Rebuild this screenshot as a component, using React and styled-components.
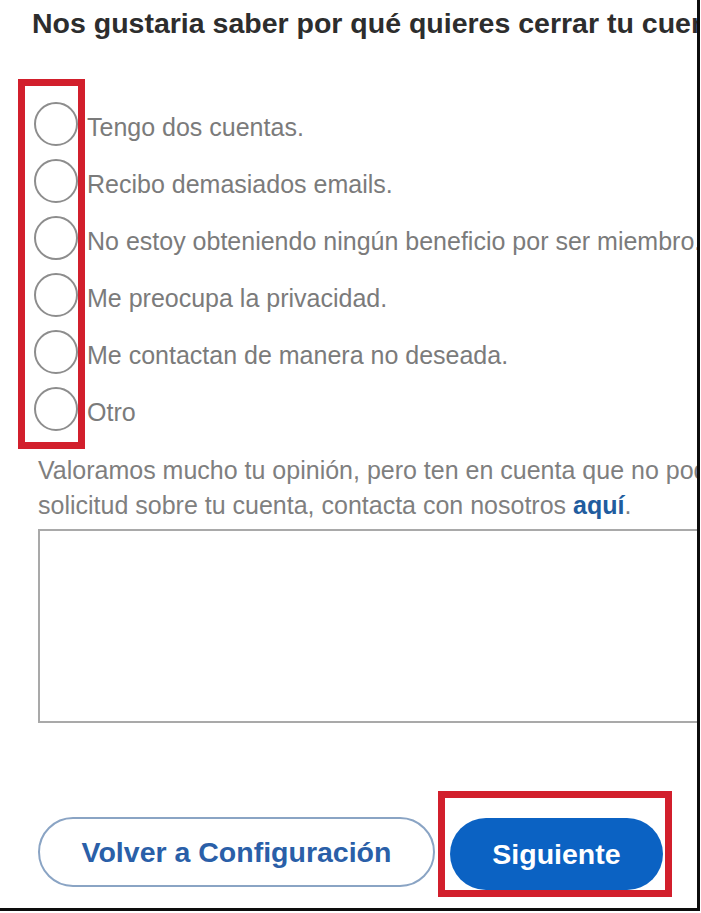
import React from "react";
import styled, { createGlobalStyle } from "styled-components";

const GlobalStyle = createGlobalStyle`
  html, body {
    margin: 0;
    padding: 0;
    background: #ffffff;
  }
  body {
    font-family: "Liberation Sans", Arial, sans-serif;
  }
  * { box-sizing: border-box; }
`;

const Frame = styled.div`
  width: 700px;
  height: 911px;
  border-right: 3px solid #0d0d0d;
  border-bottom: 3px solid #0d0d0d;
  overflow: hidden;
  background: #ffffff;
  display: flex;
  flex-direction: column;
`;

const Title = styled.h1`
  margin: 7px 0 0 32px;
  font-family: "Liberation Sans", Arial, sans-serif;
  font-weight: 700;
  font-size: 28.5px;
  line-height: 33px;
  color: #2d2d2d;
  white-space: nowrap;
`;

const Options = styled.div`
  margin: 39px 0 0 18px;
  display: flex;
  align-items: flex-start;
`;

const Highlight = styled.div`
  border: 7px solid #d21f2c;
  padding: ${(p) => p.$pad};
`;

const RadioColumn = styled.div`
  display: flex;
  flex-direction: column;
`;

const RadioCell = styled.div`
  height: 57px;
  display: flex;
  align-items: center;
`;

const Radio = styled.span`
  display: block;
  width: 44px;
  height: 44px;
  border-radius: 50%;
  border: 2px solid #8d8d8d;
  background: #ffffff;
`;

const LabelColumn = styled.div`
  display: flex;
  flex-direction: column;
  padding-top: 17px;
  margin-left: 2px;
`;

const OptionLabel = styled.div`
  height: 57px;
  display: flex;
  align-items: center;
  padding-top: 5px;
  font-size: 25px;
  color: #7b7b7b;
  white-space: nowrap;
`;

const Note = styled.p`
  margin: 4px 0 0 38px;
  font-size: 25px;
  line-height: 35px;
  color: #7f7f7f;
  white-space: nowrap;
`;

const Link = styled.a`
  color: #215c9e;
  font-weight: 700;
  text-decoration: none;
`;

const TextArea = styled.textarea`
  display: block;
  margin: 6px 0 0 38px;
  width: 700px;
  height: 194px;
  border: 2px solid #a9a9a9;
  border-right: none;
  border-radius: 0;
  resize: none;
  flex-shrink: 0;
  background: #fff;
`;

const Actions = styled.div`
  margin: 68px 0 0 38px;
  display: flex;
  align-items: flex-start;
  gap: 3px;
`;

const PillButton = styled.button`
  height: ${(p) => (p.$primary ? "72px" : "70px")};
  width: ${(p) => p.$width};
  margin-top: ${(p) => (p.$primary ? "0" : "26px")};
  border-radius: 36px;
  font-family: "Liberation Sans", Arial, sans-serif;
  font-weight: 700;
  font-size: 28.5px;
  cursor: pointer;
  border: ${(p) => (p.$primary ? "none" : "2px solid #8aa4c4")};
  background: ${(p) => (p.$primary ? "#0b62c3" : "#ffffff")};
  color: ${(p) => (p.$primary ? "#ffffff" : "#2a5fa8")};
`;

const reasons = [
  "Tengo dos cuentas.",
  "Recibo demasiados emails.",
  "No estoy obteniendo ningún beneficio por ser miembro.",
  "Me preocupa la privacidad.",
  "Me contactan de manera no deseada.",
  "Otro",
];

export default function App() {
  return (
    <>
      <GlobalStyle />
      <Frame>
        <Title>Nos gustaria saber por qué quieres cerrar tu cuenta?</Title>
        <Options>
          <Highlight $pad="9px 0 5px 9px">
            <RadioColumn>
              {reasons.map((r) => (
                <RadioCell key={r}>
                  <Radio />
                </RadioCell>
              ))}
            </RadioColumn>
          </Highlight>
          <LabelColumn>
            {reasons.map((r) => (
              <OptionLabel key={r}>{r}</OptionLabel>
            ))}
          </LabelColumn>
        </Options>
        <Note>
          Valoramos mucho tu opinión, pero ten en cuenta que no podemos responder. Si tienes alguna pregunta o
          <br />
          solicitud sobre tu cuenta, contacta con nosotros <Link href="#">aquí</Link>.
        </Note>
        <TextArea />
        <Actions>
          <PillButton $width="397px">Volver a Configuración</PillButton>
          <Highlight $pad="20px 2px 0 5px">
            <PillButton $primary $width="213px">Siguiente</PillButton>
          </Highlight>
        </Actions>
      </Frame>
    </>
  );
}
